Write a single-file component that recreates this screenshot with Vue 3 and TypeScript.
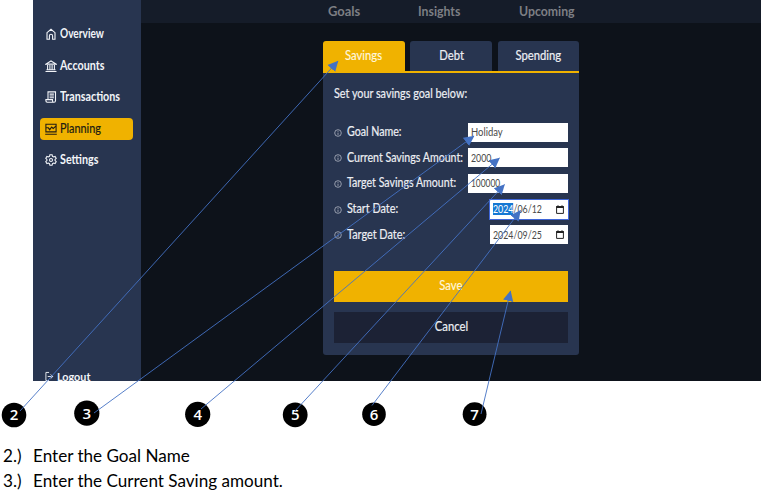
<script setup lang="ts">
type IconName = 'home' | 'bank' | 'receipt' | 'planning' | 'gear'

const navItems: { label: string; icon: IconName; active?: boolean; cls: string }[] = [
  { label: 'Overview', icon: 'home', cls: 'overview' },
  { label: 'Accounts', icon: 'bank', cls: 'accounts' },
  { label: 'Transactions', icon: 'receipt', cls: 'transactions' },
  { label: 'Planning', icon: 'planning', active: true, cls: 'planning' },
  { label: 'Settings', icon: 'gear', cls: 'settings' },
]

const tabs = ['Savings', 'Debt', 'Spending']

const fields = [
  { label: 'Goal Name:', value: 'Holiday', cls: 'f-name' },
  { label: 'Current Savings Amount:', value: '2000', cls: 'f-current' },
  { label: 'Target Savings Amount:', value: '100000', cls: 'f-target' },
  { label: 'Start Date:', date: ['2024', '/06/12'], focused: true, cls: 'f-start' },
  { label: 'Target Date:', date: ['2024', '/09/25'], cls: 'f-end' },
]

const steps = [
  { n: 2, x: 14, y: 415, r: 12.3 },
  { n: 3, x: 86.8, y: 413.2, r: 12.6 },
  { n: 4, x: 197.7, y: 414.3, r: 12.6 },
  { n: 5, x: 295.2, y: 414.8, r: 12.4 },
  { n: 6, x: 374, y: 414.2, r: 11.8 },
  { n: 7, x: 474.6, y: 414.2, r: 11.9 },
]

const arrows = [
  { x1: 20, y1: 411, x2: 338, y2: 61 },
  { x1: 94, y1: 413, x2: 474, y2: 136 },
  { x1: 201, y1: 409, x2: 499.5, y2: 158 },
  { x1: 294, y1: 412, x2: 504.5, y2: 184.5 },
  { x1: 372, y1: 405.5, x2: 520.5, y2: 210.5 },
  { x1: 481, y1: 414, x2: 510.5, y2: 291 },
]
</script>

<template>
  <div class="page">
    <div class="shot">
      <aside class="sidebar">
        <nav>
          <div v-for="item in navItems" :key="item.label" class="nav-item" :class="[item.cls, { active: item.active }]">
            <svg viewBox="0 0 12 12" class="icon">
              <g v-if="item.icon === 'home'">
                <path d="M2 11.200V4.700L6 1.300l4 3.400v6.500H7.600V7.900a1.600 1.600 0 0 0-3.200 0v3.300z" />
              </g>
              <g v-else-if="item.icon === 'bank'">
                <path d="M.8 4.100 6 1l5.200 3.100zM.5 11.500h11M1.500 9.700h9M2.600 5v4.500M4.900 5v4.500M7.100 5v4.500M9.400 5v4.500" />
              </g>
              <g v-else-if="item.icon === 'receipt'">
                <path d="M3 8.400V.9h7.500v8.800a1.500 1.500 0 0 1-1.500 1.500H2.200A1.400 1.400 0 0 1 .9 9.800V8.600h6.600v1.200A1.400 1.400 0 0 0 9 11.200M4.600 3.100h4.300M4.600 5h4.300M4.600 6.700h4.300" />
              </g>
              <g v-else-if="item.icon === 'planning'">
                <path d="M.9 1.200h10.200v7.700H.9zM.2 11.300h11.600M1 4.800h2.300l1.400 1.900 2-2.700 1.500 1.400 2.700-2.300" />
              </g>
              <g v-else>
                <path d="M4.900.8h2.200l.4 1.500 1.100.6 1.500-.5 1.100 1.900-1.100 1.100v1.200l1.100 1.100-1.100 1.900-1.500-.5-1.100.6-.4 1.500H4.900l-.4-1.500-1.100-.6-1.500.5L.8 7.700l1.100-1.100V5.400L.8 4.300l1.100-1.900 1.500.5 1.100-.6z" />
                <circle cx="6" cy="6" r="1.500" />
              </g>
            </svg>
            <span class="nav-text">{{ item.label }}</span>
          </div>
        </nav>
        <div class="logout">
          <svg viewBox="0 0 10 12" class="logout-icon">
            <path d="M4.500 1.500H1v9h3.500M3 6h5.500M6.300 3.700 8.600 6 6.300 8.300" />
          </svg>
          <span class="nav-text">Logout</span>
        </div>
      </aside>

      <main class="main">
        <header class="topbar">
          <span class="goals">Goals</span>
          <span class="insights">Insights</span>
          <span class="upcoming">Upcoming</span>
        </header>

        <section class="panel">
          <div class="tabs">
            <div v-for="(t, i) in tabs" :key="t" class="tab" :class="{ active: i === 0 }">
              <span>{{ t }}</span>
            </div>
          </div>
          <div class="card">
            <p class="intro"><span>Set your savings goal below:</span></p>
            <div class="fields">
              <div v-for="f in fields" :key="f.label" class="field">
                <svg class="info" viewBox="0 0 8 8">
                  <circle cx="4" cy="4" r="3.300" />
                  <path d="M4 3.600v2.300M4 2v.8" />
                </svg>
                <span class="label" :class="f.cls">{{ f.label }}</span>
                <div v-if="f.date" class="input date" :class="{ focused: f.focused }">
                  <span class="value"><span class="year">{{ f.date[0] }}</span>{{ f.date[1] }}</span>
                  <svg class="cal" viewBox="0 0 8 9">
                    <path d="M.6 1.500h6.800v6.900H.6z" />
                    <path class="fill" d="M.3 1h7.400v2H.3zM1.500.2h1v1h-1zM5.500.2h1v1h-1z" />
                  </svg>
                </div>
                <div v-else class="input"><span class="value" :class="f.cls">{{ f.value }}</span></div>
              </div>
            </div>
            <div class="btn save"><span>Save</span></div>
            <div class="btn cancel"><span>Cancel</span></div>
          </div>
        </section>
      </main>
    </div>

    <ol class="notes">
      <li><span class="num">2.)</span><span>Enter the Goal Name</span></li>
      <li><span class="num">3.)</span><span>Enter the Current Saving amount.</span></li>
    </ol>

    <svg class="overlay" viewBox="0 0 761 495">
      <defs>
        <marker id="head" markerUnits="userSpaceOnUse" markerWidth="11" markerHeight="11" refX="10" refY="5.500" orient="auto">
          <path d="M0 .3 10.500 5.500 0 10.700z" fill="#4472c4" />
        </marker>
      </defs>
      <g v-for="s in steps" :key="s.n">
        <circle :cx="s.x" :cy="s.y" :r="s.r" fill="#000" />
        <text :x="s.x" :y="s.y + 5.400" class="step">{{ s.n }}</text>
      </g>
      <line v-for="(a, i) in arrows" :key="i" :x1="a.x1" :y1="a.y1" :x2="a.x2" :y2="a.y2" class="arrow" marker-end="url(#head)" />
    </svg>
  </div>
</template>

<style>
body {
  background: #fff;
}
</style>

<style scoped>
* {
  box-sizing: border-box;
}
.page {
  position: relative;
  width: 761px;
  height: 495px;
  overflow: hidden;
  background: #fff;
  font-family: Lato, 'Liberation Sans', sans-serif;
  white-space: nowrap;
}
.shot {
  display: flex;
  height: 381px;
  margin-left: 33px;
  overflow: hidden;
  background: #0d121a;
}
.sidebar {
  flex: none;
  display: flex;
  flex-direction: column;
  width: 108px;
  height: 381px;
  padding: 23px 8px 0 7px;
  background: #283550;
  color: #f2f4f8;
  overflow: hidden;
}
nav {
  display: flex;
  flex-direction: column;
  gap: 9.600px;
}
.nav-item {
  display: flex;
  align-items: center;
  gap: 3px;
  height: 22px;
  padding-left: 5px;
  border-radius: 4px;
  font-size: 12.500px;
  font-weight: 700;
  line-height: 20px;
}
.nav-text {
  transform: scaleX(0.86);
  transform-origin: left;
}
.overview .nav-text {
  transform: scaleX(0.81);
}
.planning .nav-text {
  transform: scaleX(0.87);
  -webkit-text-stroke: 0.200px currentColor;
}
.nav-item.active {
  background: #f0b200;
  color: #221d12;
  font-weight: 400;
}
.icon {
  flex: none;
  width: 12px;
  height: 12px;
  fill: none;
  stroke: currentColor;
  stroke-width: 1.100;
}
.logout {
  flex: none;
  display: flex;
  align-items: center;
  gap: 3px;
  height: 16px;
  margin-top: 197px;
  padding-left: 5px;
  font-size: 12px;
  font-weight: 700;
}
.logout .nav-text {
  transform: scaleX(0.9);
}
.logout-icon {
  width: 9px;
  height: 11px;
  fill: none;
  stroke: currentColor;
}
.main {
  flex: 1;
}
.topbar {
  display: flex;
  height: 23px;
  padding-left: 187px;
  background: #151c29;
  color: #7d7f84;
  font-size: 13.500px;
  font-weight: 700;
  line-height: 22px;
}
.topbar span {
  flex: none;
  transform: scaleX(0.91);
  transform-origin: left;
}
.topbar .goals {
  width: 90px;
  transform: scaleX(0.96);
}
.insights {
  width: 101px;
}
.panel {
  width: 256px;
  margin: 18px 0 0 182px;
  color: #eceef3;
}
.tabs {
  display: grid;
  grid-template-columns: 82px 82px 81.500px;
  gap: 5.250px;
  height: 32px;
  border-bottom: 2px solid #f0b200;
}
.tab {
  border-radius: 3px 3px 0 0;
  background: #283550;
  font-size: 12.500px;
  line-height: 29px;
  text-align: center;
  -webkit-text-stroke: 0.200px currentColor;
}
.tab span,
.btn span {
  display: inline-block;
  transform: scaleX(0.9);
}
.tab.active {
  background: #f0b200;
  color: #fff6da;
}
.card {
  height: 282px;
  padding: 12px 11px 0 11px;
  background: #283550;
  border-radius: 0 0 3px 3px;
}
.intro {
  margin: 0;
  font-size: 12.500px;
  line-height: 18px;
  -webkit-text-stroke: 0.200px currentColor;
}
.intro span {
  display: inline-block;
  transform: scaleX(0.865);
  transform-origin: left;
}
.fields {
  padding-top: 16.500px;
}
.field {
  display: flex;
  align-items: center;
  height: 25.600px;
}
.info {
  flex: none;
  width: 8px;
  height: 8px;
  margin: 1px 5px 0 0;
  fill: none;
  stroke: #c4c9d3;
  stroke-width: 0.700;
}
.label {
  width: 0;
  font-size: 12.500px;
  line-height: 18px;
  transform: scaleX(0.85);
  transform-origin: left;
  -webkit-text-stroke: 0.200px currentColor;
}
.label.f-start {
  transform: scaleX(0.865);
}
.label.f-end {
  transform: scaleX(0.87);
}
.input {
  flex: none;
  display: flex;
  align-items: center;
  width: 100px;
  height: 19px;
  margin-left: auto;
  padding-left: 3px;
  background: #fff;
  color: #4a4a4a;
  font-size: 10.500px;
  line-height: 14px;
}
.value {
  width: 52px;
  transform: scaleX(0.84);
  transform-origin: left;
}
.value.f-name {
  transform: scaleX(0.9);
}
.value.f-target {
  transform: scaleX(0.8);
}
.input.date {
  width: 78.500px;
}
.input.focused {
  outline: 1px solid #3f66d8;
  outline-offset: -0.500px;
}
.focused .year {
  background: #1678d3;
  color: #fff;
}
.cal {
  flex: none;
  width: 8px;
  height: 9px;
  margin: 0 4px 0 auto;
  fill: none;
  stroke: #222;
}
.cal .fill {
  fill: #222;
  stroke: none;
}
.btn {
  height: 31px;
  font-size: 12.500px;
  line-height: 29px;
  text-align: center;
  -webkit-text-stroke: 0.200px currentColor;
}
.save {
  margin-top: 23.500px;
  background: #f0b200;
  color: #fff6da;
}
.cancel {
  margin-top: 10px;
  background: #1c2235;
}
.notes {
  margin: 62px 0 0;
  padding: 0 0 0 3px;
  list-style: none;
  color: #000;
  font-size: 17.100px;
  line-height: 25px;
}
.notes li {
  display: flex;
}
.num {
  width: 30px;
}
.overlay {
  position: absolute;
  inset: 0;
  width: 761px;
  height: 495px;
}
.step {
  fill: #fff;
  font-family: 'Open Sans', sans-serif;
  font-size: 15px;
  font-weight: 600;
  text-anchor: middle;
}
.arrow {
  stroke: #4472c4;
  stroke-width: 0.900;
}
</style>
